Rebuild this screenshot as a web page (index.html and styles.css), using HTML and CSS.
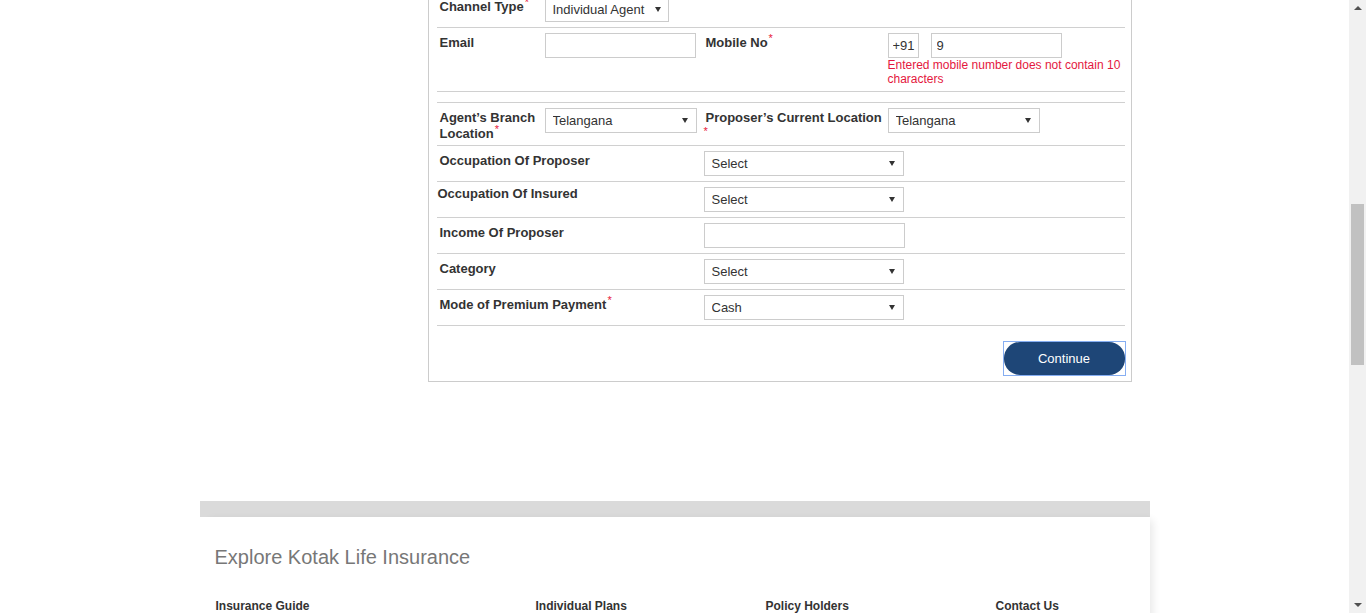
FILE: index.html
```html
<!DOCTYPE html>
<html lang="en">
<head>
<meta charset="utf-8">
<title>Kotak Life Insurance - Proposal Details</title>
<link rel="stylesheet" href="styles.css">
</head>
<body>
<div class="page">
  <div class="container">
    <form class="card">
      <div class="row">
        <div class="lbl">Channel Type<sup class="req">*</sup></div>
        <div class="fld"><span class="sel sel-ch"><select class="w124"><option>Individual Agent</option></select></span></div>
      </div>
      <div class="row">
        <div class="lbl">Email</div>
        <div class="fld"><input class="inp w151" type="text"></div>
        <div class="lbl lbl2">Mobile No<sup class="req">*</sup></div>
        <div class="fld">
          <div class="mobile">
            <input class="inp code" type="text" value="+91">
            <input class="inp w131" type="text" value="9">
          </div>
          <div class="err">Entered mobile number does not contain 10 characters</div>
        </div>
      </div>
      <div class="row spacer"></div>
      <div class="row">
        <div class="lbl">Agent’s Branch Location<sup class="req">*</sup></div>
        <div class="fld"><span class="sel"><select class="w152"><option>Telangana</option></select></span></div>
        <div class="lbl lbl2">Proposer’s Current Location<span class="req req-nl">*</span></div>
        <div class="fld"><span class="sel"><select class="w152"><option>Telangana</option></select></span></div>
      </div>
      <div class="row">
        <div class="lbl span2">Occupation Of Proposer</div>
        <div class="fld"><span class="sel"><select class="w200"><option>Select</option></select></span></div>
      </div>
      <div class="row">
        <div class="lbl span2 lbl-ins">Occupation Of Insured</div>
        <div class="fld"><span class="sel"><select class="w200"><option>Select</option></select></span></div>
      </div>
      <div class="row">
        <div class="lbl span2">Income Of Proposer</div>
        <div class="fld"><input class="inp w201" type="text"></div>
      </div>
      <div class="row">
        <div class="lbl span2">Category</div>
        <div class="fld"><span class="sel"><select class="w200"><option>Select</option></select></span></div>
      </div>
      <div class="row">
        <div class="lbl span2">Mode of Premium Payment<sup class="req">*</sup></div>
        <div class="fld"><span class="sel"><select class="w200"><option>Cash</option></select></span></div>
      </div>
      <div class="actions">
        <span class="focus"><button type="button" class="btn">Continue</button></span>
      </div>
    </form>

    <footer class="footer">
      <div class="band"></div>
      <div class="foot-inner">
        <h2 class="foot-title">Explore Kotak Life Insurance</h2>
        <div class="foot-cols">
          <h4>Insurance Guide</h4>
          <h4>Individual Plans</h4>
          <h4>Policy Holders</h4>
          <h4>Contact Us</h4>
        </div>
      </div>
    </footer>
  </div>
</div>
<div class="scrollbar">
  <span class="arr arr-up"></span>
  <span class="thumb"></span>
  <span class="arr arr-down"></span>
</div>
</body>
</html>
```
FILE: styles.css
```css
* { box-sizing: border-box; }
html, body {
  margin: 0;
  padding: 0;
  height: 100%;
  overflow: hidden;
  background: #fff;
}
body {
  font-family: "Liberation Sans", Arial, sans-serif;
  color: #333;
}
.page { margin-right: 17px; }
.container {
  width: 950px;
  margin: 0 auto;
}

/* form card */
.card {
  margin: -9px 0 0 228px;
  width: 704px;
  border: 1px solid #cccccc;
  padding: 0 6px 5px 8px;
}
.row {
  display: grid;
  grid-template-columns: 108px 159px 184px 1fr;
  align-items: start;
  border-bottom: 1px solid #d0d0d0;
}
.spacer { height: 11px; }
.lbl {
  font-size: 13px;
  font-weight: bold;
  line-height: 16px;
  padding: 7px 3px 3px;
  color: #333;
}
.lbl2 { padding-left: 2px; }
.span2 { grid-column: 1 / span 2; }
.lbl-ins { padding: 4px 3px 3px 1px; }
.req {
  color: #e8173c;
  font-size: 11px;
  font-weight: normal;
  line-height: 0;
  margin-left: 1px;
}
.req-nl {
  display: block;
  line-height: 11px;
  margin-left: -2px;
}
.fld { padding: 5px 0; }

.sel {
  position: relative;
  display: inline-block;
  vertical-align: top;
}
.sel select {
  -webkit-appearance: none;
  appearance: none;
  display: block;
  height: 25px;
  border: 1px solid #cccccc;
  border-radius: 0;
  background: #fff;
  font: 13px "Liberation Sans", Arial, sans-serif;
  color: #333;
  padding: 0 0 0 7px;
  margin: 0;
}
.sel::after {
  content: "";
  position: absolute;
  right: 9px;
  top: 10px;
  border-left: 3px solid transparent;
  border-right: 3px solid transparent;
  border-top: 5px solid #333;
  pointer-events: none;
}
.sel-ch::after { right: 8px; }

.inp {
  display: block;
  height: 25px;
  border: 1px solid #cccccc;
  border-radius: 0;
  background: #fff;
  font: 13px "Liberation Sans", Arial, sans-serif;
  color: #333;
  padding: 0 5px;
  margin: 0;
}
.w124 { width: 124px; }
.w131 { width: 131px; }
.w151 { width: 151px; }
.w152 { width: 152px; }
.w200 { width: 200px; }
.w201 { width: 201px; }
.code { width: 31px; padding: 0 3px 0 4px; }
.mobile {
  display: flex;
  gap: 12px;
}
.err {
  color: #e4173e;
  font-size: 12px;
  line-height: 14px;
}

.actions {
  display: flex;
  justify-content: flex-end;
  padding-top: 15px;
  margin-right: -1px;
}
.focus {
  display: inline-block;
  border: 1px solid #86aef2;
  line-height: 0;
}
.btn {
  display: block;
  width: 121px;
  height: 33px;
  border: none;
  border-radius: 16px;
  background: #1e4677;
  color: #fff;
  font: 13px "Liberation Sans", Arial, sans-serif;
  padding: 0;
  margin: 0;
}

/* footer */
.footer { margin-top: 119px; }
.band {
  height: 16px;
  background: #dadada;
}
.foot-inner {
  position: relative;
  background: #fff;
  box-shadow: 6px 0 8px -3px rgba(0, 0, 0, 0.09);
  padding: 28px 15px 24px;
}
.foot-title {
  margin: 0 0 29px;
  font-size: 20px;
  line-height: 24px;
  font-weight: normal;
  color: #777;
}
.foot-cols {
  display: grid;
  grid-template-columns: 320px 230px 230px 1fr;
  padding-left: 1px;
}
.foot-cols h4 {
  margin: 0;
  font-size: 12px;
  line-height: 16px;
  font-weight: bold;
  color: #333;
}

/* fake browser scrollbar (page is scrolled) */
.scrollbar {
  position: fixed;
  top: 0;
  right: 0;
  width: 17px;
  height: 100%;
  background: #f1f1f1;
}
.thumb {
  position: absolute;
  left: 2px;
  top: 204px;
  width: 13px;
  height: 161px;
  background: #c1c1c1;
}
.arr {
  position: absolute;
  left: 5px;
  width: 0;
  height: 0;
  border-left: 4px solid transparent;
  border-right: 4px solid transparent;
}
.arr-up {
  top: 6px;
  border-bottom: 4px solid #505050;
}
.arr-down {
  bottom: 6px;
  border-top: 4px solid #505050;
}
```
